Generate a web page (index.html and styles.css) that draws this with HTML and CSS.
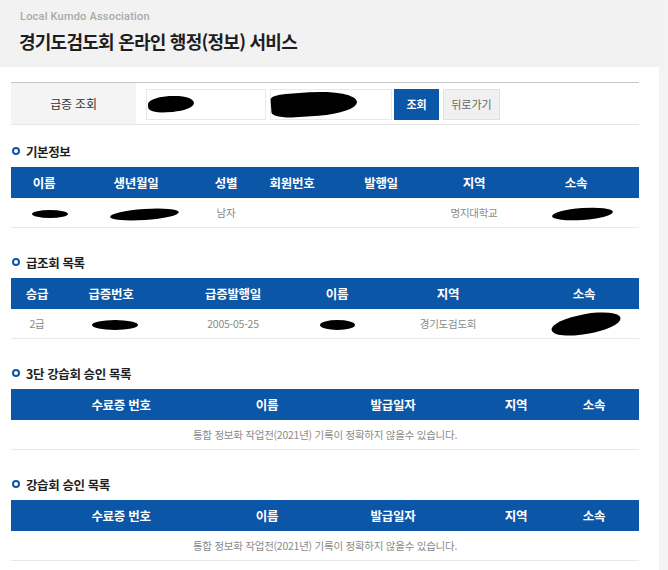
FILE: index.html
```html
<!DOCTYPE html>
<html lang="ko">
<head>
<meta charset="utf-8">
<title>경기도검도회 온라인 행정(정보) 서비스</title>
<link rel="stylesheet" href="styles.css">
</head>
<body>
<div class="page">
  <header class="top">
    <div class="sub">Local Kumdo Association</div>
    <h1 class="title">경기도검도회 온라인 행정(정보) 서비스</h1>
  </header>

  <div class="search">
    <div class="search-label">급증 조회</div>
    <div class="search-fields">
      <div class="field f1"><span class="blob b-in1"></span></div>
      <div class="field f2"><span class="blob b-in2"></span></div>
      <button class="btn btn-primary" type="button">조회</button>
      <button class="btn btn-back" type="button">뒤로가기</button>
    </div>
  </div>

  <section class="sec sec-first">
    <h2 class="sec-title"><span class="dot"></span>기본정보</h2>
    <table class="tbl">
      <colgroup>
        <col class="w66"><col class="w118"><col class="w62"><col class="w70"><col class="w108"><col class="w78"><col>
      </colgroup>
      <thead>
        <tr><th>이름</th><th>생년월일</th><th>성별</th><th>회원번호</th><th>발행일</th><th>지역</th><th>소속</th></tr>
      </thead>
      <tbody>
        <tr>
          <td><span class="blob b-name1"></span></td>
          <td><span class="blob b-birth"></span></td>
          <td>남자</td>
          <td></td>
          <td></td>
          <td>명지대학교</td>
          <td><span class="blob b-org1"></span></td>
        </tr>
      </tbody>
    </table>
  </section>

  <section class="sec">
    <h2 class="sec-title"><span class="dot"></span>급조회 목록</h2>
    <table class="tbl">
      <colgroup>
        <col class="w52"><col class="w96"><col class="w148"><col class="w60"><col class="w162"><col>
      </colgroup>
      <thead>
        <tr><th>승급</th><th>급증번호</th><th>급증발행일</th><th>이름</th><th>지역</th><th>소속</th></tr>
      </thead>
      <tbody>
        <tr>
          <td>2급</td>
          <td><span class="blob b-num"></span></td>
          <td>2005-05-25</td>
          <td><span class="blob b-name2"></span></td>
          <td>경기도검도회</td>
          <td><span class="blob b-org2"></span></td>
        </tr>
      </tbody>
    </table>
  </section>

  <section class="sec">
    <h2 class="sec-title"><span class="dot"></span>3단 강습회 승인 목록</h2>
    <table class="tbl">
      <colgroup>
        <col class="w220"><col class="w72"><col class="w180"><col class="w66"><col>
      </colgroup>
      <thead>
        <tr><th>수료증 번호</th><th>이름</th><th>발급일자</th><th>지역</th><th>소속</th></tr>
      </thead>
      <tbody>
        <tr><td colspan="5">통합 정보화 작업전(2021년) 기록이 정확하지 않을수 있습니다.</td></tr>
      </tbody>
    </table>
  </section>

  <section class="sec">
    <h2 class="sec-title"><span class="dot"></span>강습회 승인 목록</h2>
    <table class="tbl">
      <colgroup>
        <col class="w220"><col class="w72"><col class="w180"><col class="w66"><col>
      </colgroup>
      <thead>
        <tr><th>수료증 번호</th><th>이름</th><th>발급일자</th><th>지역</th><th>소속</th></tr>
      </thead>
      <tbody>
        <tr><td colspan="5">통합 정보화 작업전(2021년) 기록이 정확하지 않을수 있습니다.</td></tr>
      </tbody>
    </table>
  </section>
</div>
</body>
</html>
```

FILE: styles.css
```css
html {
  background: #f3f3f3;
}
body {
  margin: 0;
  font-family: "Noto Sans CJK KR", "Noto Sans", sans-serif;
  color: #222;
}
.page {
  width: 659px;
  min-height: 570px;
  background: #fff;
  padding-bottom: 20px;
}
.top {
  height: 67px;
  background: #f2f2f2;
  padding: 10px 0 0 20px;
  box-sizing: border-box;
}
.sub {
  font-family: "Roboto", "Noto Sans", sans-serif;
  font-size: 11px;
  font-weight: 500;
  color: #a9a9a9;
  line-height: 14px;
  letter-spacing: 0.2px;
}
.title {
  margin: 5px 0 0 -1px;
  font-size: 18px;
  font-weight: 700;
  line-height: 24px;
  letter-spacing: -0.75px;
  color: #1e1e1e;
}

.search {
  margin: 15px 0 0 11px;
  width: 628px;
  height: 41px;
  border-top: 1px solid #c6c6c6;
  border-bottom: 1px solid #e6e6e6;
  display: flex;
}
.search-label {
  width: 125px;
  background: #f4f4f4;
  font-size: 12px;
  color: #333;
  display: flex;
  align-items: center;
  justify-content: center;
  letter-spacing: -0.2px;
}
.search-fields {
  display: flex;
  align-items: center;
  padding: 1px 0 0 10px;
  gap: 4px;
}
.field {
  height: 31px;
  box-sizing: border-box;
  border: 1px solid #e8e8e8;
  background: #fff;
  position: relative;
}
.f1 { width: 120px; }
.f2 { width: 122px; margin-right: -2px; }
.btn {
  height: 31px;
  box-sizing: border-box;
  font-family: "Noto Sans CJK KR", sans-serif;
  font-size: 11px;
  padding: 0;
  border-radius: 0;
}
.btn-primary {
  width: 45px;
  background: #0b56a7;
  border: 1px solid #0b56a7;
  color: #fff;
  font-weight: 700;
}
.btn-back {
  width: 57px;
  background: #f0f0f0;
  border: 1px solid #e2e2e2;
  color: #666;
}

.sec {
  margin: 24px 0 0 11px;
  width: 628px;
}
.sec-first {
  margin-top: 16px;
}
.sec-title {
  margin: 0 0 6px 1px;
  height: 20px;
  display: flex;
  align-items: center;
  font-size: 12.5px;
  font-weight: 700;
  letter-spacing: -0.4px;
  color: #1e1e1e;
}
.dot {
  width: 8px;
  height: 8px;
  box-sizing: border-box;
  border: 2px solid #0b56a7;
  border-radius: 50%;
  margin-right: 6px;
}

.tbl {
  width: 628px;
  border-collapse: collapse;
  table-layout: fixed;
}
.tbl th {
  height: 31px;
  padding: 0;
  background: #0b56a7;
  color: #fff;
  font-size: 12.5px;
  font-weight: 700;
  letter-spacing: -0.3px;
  text-align: center;
}
.tbl td {
  height: 29px;
  padding: 0;
  border-bottom: 1px solid #e8e8e8;
  font-size: 10.5px;
  color: #8a8a8a;
  text-align: center;
  letter-spacing: -0.25px;
}
.w52 { width: 52px; }
.w60 { width: 60px; }
.w62 { width: 62px; }
.w66 { width: 66px; }
.w70 { width: 70px; }
.w72 { width: 72px; }
.w78 { width: 78px; }
.w96 { width: 96px; }
.w108 { width: 108px; }
.w118 { width: 118px; }
.w148 { width: 148px; }
.w162 { width: 162px; }
.w180 { width: 180px; }
.w220 { width: 220px; }

.blob {
  display: inline-block;
  background: #000;
  border-radius: 50%;
  vertical-align: middle;
}
.b-in1 {
  position: absolute;
  left: 1px;
  top: 6px;
  width: 46px;
  height: 16px;
  border-radius: 45% 55% 50% 40%;
  transform: rotate(-4deg);
}
.b-in2 {
  position: absolute;
  left: 0;
  top: 2px;
  width: 86px;
  height: 24px;
  border-radius: 20% 60% 50% 30%;
  transform: rotate(-4deg);
}
.b-name1 { width: 36px; height: 8px; margin-left: 12px; }
.b-birth { width: 69px; height: 11px; transform: rotate(-4deg); margin-left: 16px; }
.b-org1 { width: 61px; height: 12px; transform: rotate(-4deg); margin-left: 12px; }
.b-num { width: 46px; height: 10px; margin-left: 8px; }
.b-name2 { width: 35px; height: 10px; margin-left: 0; }
.b-org2 { width: 70px; height: 20px; transform: rotate(-10deg); margin-left: 4px; }
```
